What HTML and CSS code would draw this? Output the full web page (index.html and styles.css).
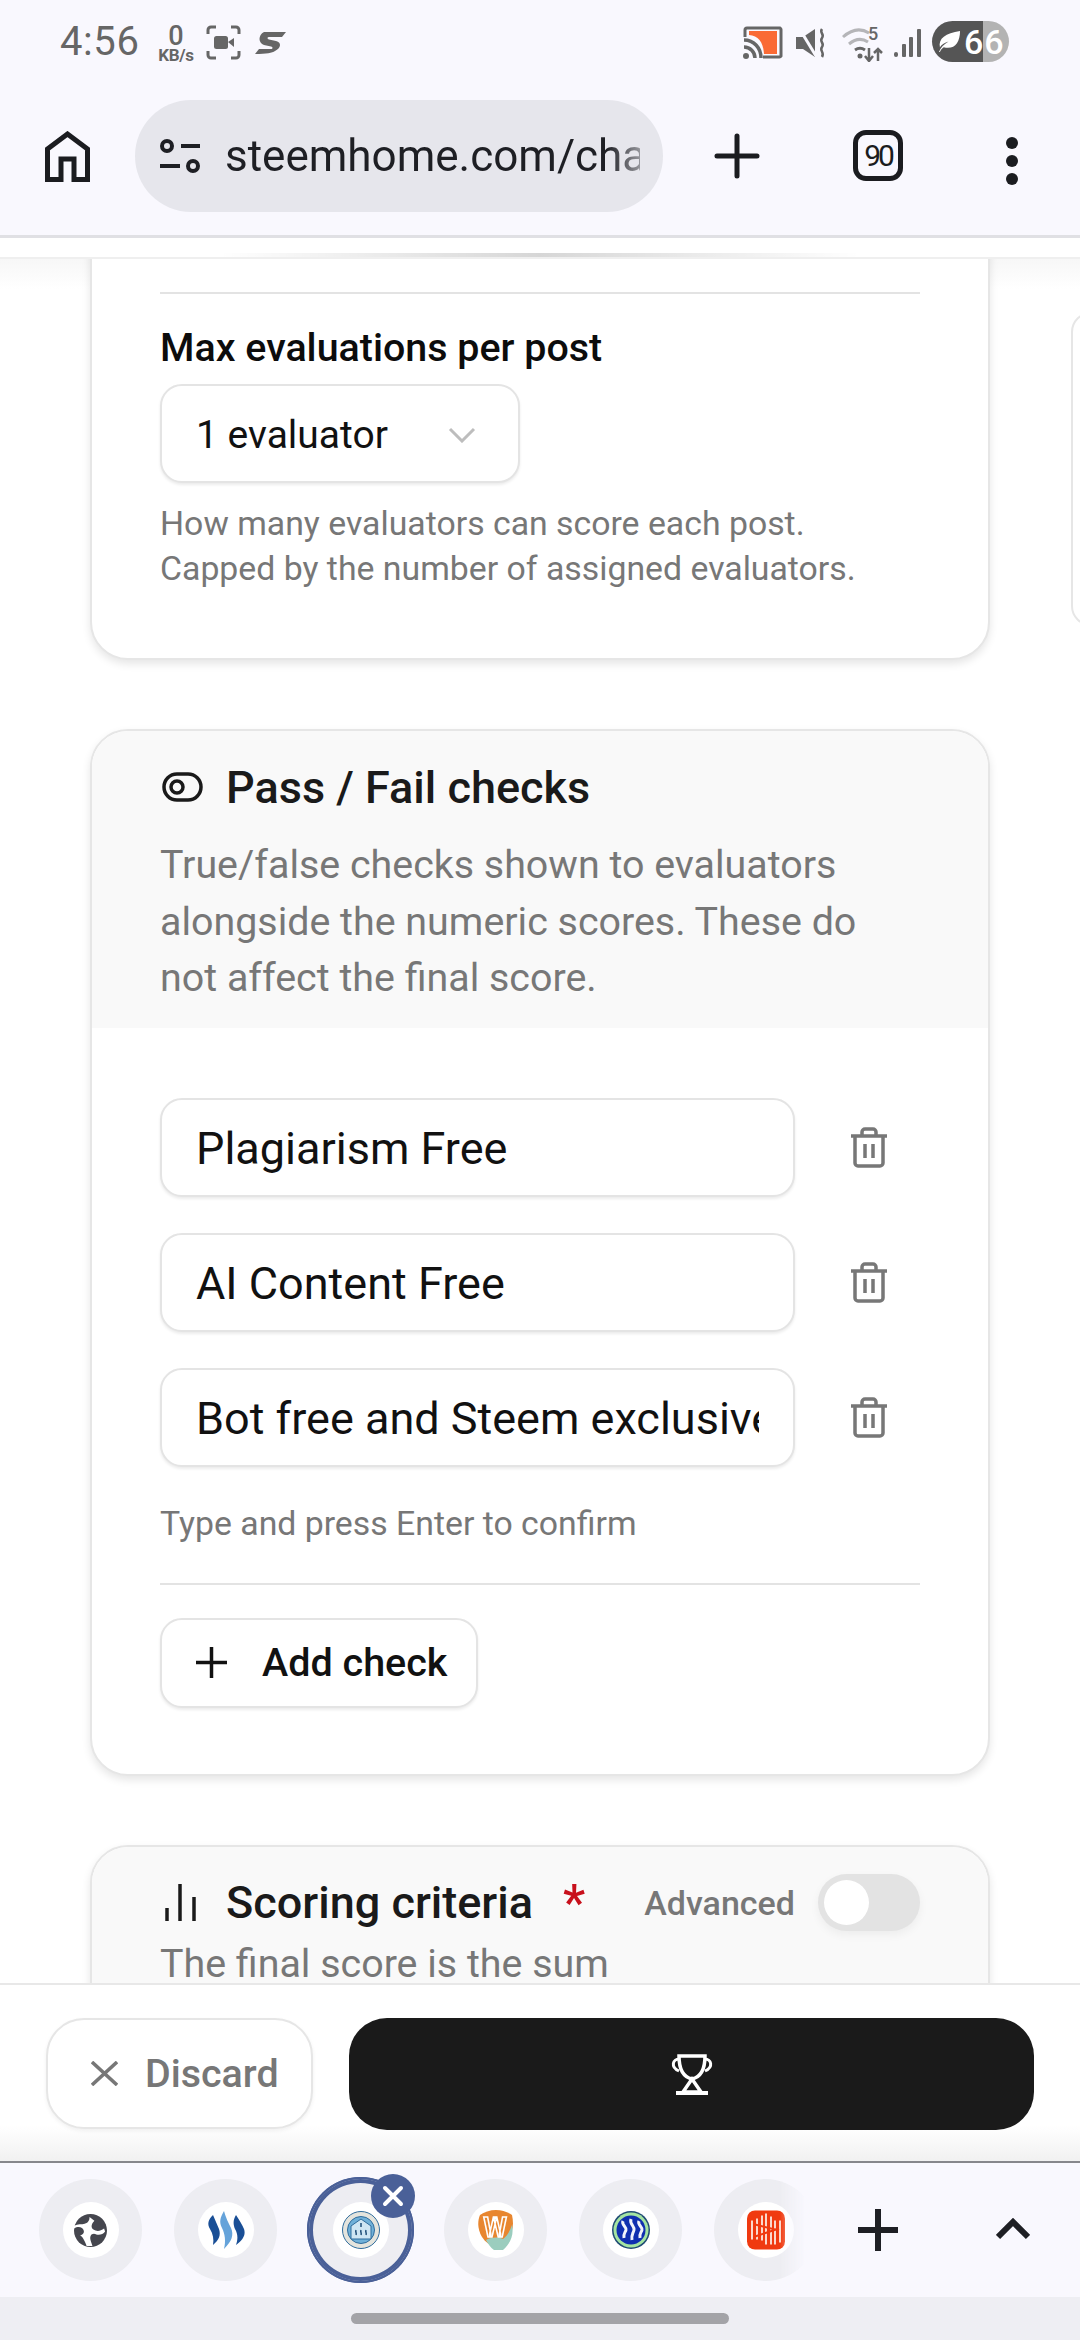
FILE: index.html
```html
<!DOCTYPE html>
<html lang="en">
<head>
    <meta charset="UTF-8">
    <meta name="viewport" content="width=device-width, initial-scale=1.0">
    <title>Challenge settings</title>
    <link rel="stylesheet" href="styles.css">
</head>
<body>
    <header class="browser-top">
        <div class="status-bar">
            <div class="status-left">
                <span class="clock">4:56</span>
                <span class="speed"><b>0</b><small>KB/s</small></span>
                <svg class="ic-record" viewBox="0 0 35 35" fill="none" stroke="#666" stroke-width="3">
                    <path d="M2 9V5a3 3 0 0 1 3-3h5M25 2h5a3 3 0 0 1 3 3v4M33 26v4a3 3 0 0 1-3 3h-5M10 33H5a3 3 0 0 1-3-3v-4"/>
                    <rect x="8" y="11" width="14" height="13" rx="2.5" fill="#666" stroke="none"/>
                    <path d="M22 17l6-4v9z" fill="#666" stroke="none"/>
                </svg>
                <svg class="ic-s" viewBox="0 0 31 23"><path d="M9 1h22l-4 5H14c-2 0-2 2 0 2.500l7 1.500c6 1.500 5 7-1 10-3 2-8 3-20 3l4-5h12c2 0 2-2 0-2.500l-7-1.500C3 12 3 4 9 1z" fill="#666"/></svg>
            </div>
            <div class="status-right">
                <svg class="ic-cast" viewBox="0 0 40 33">
                    <path d="M2 11V4a2 2 0 0 1 2-2h33a2 2 0 0 1 1 2v26a2 2 0 0 1-2 1H20" fill="none" stroke="#666" stroke-width="3"/>
                    <path d="M6 5h28v23H21C20 15 15 10 6 9z" fill="#fa6a35"/>
                    <path d="M1 14c10 0 17 8 17 18M1 21c6 0 11 5 11 11" fill="none" stroke="#666" stroke-width="3.500"/>
                    <circle cx="3" cy="30" r="3" fill="#666"/>
                </svg>
                <svg class="ic-mute" viewBox="0 0 30 30">
                    <path d="M0 9h7l12-8v28L7 21H0z" fill="#666"/>
                    <path d="M3 0l17 28" stroke="#f9f8fe" stroke-width="3"/>
                    <path d="M26 1c-3 4 3 5 0 9s3 5 0 9 3 5 0 10" fill="none" stroke="#666" stroke-width="2.500"/>
                </svg>
                <span class="wifi">
                    <svg viewBox="0 0 43 36" fill="none" stroke="#b5b5b8" stroke-width="3">
                        <path d="M1 11c9-8 18-9 26-4M7 18c6-5 13-6 19-2"/>
                        <path d="M13 24c3-2 7-2 10 0" stroke="#666"/>
                        <circle cx="18" cy="30" r="2.500" fill="#666" stroke="none"/>
                        <path d="M27 22v13M23 30l4 5 4-5M36 35V23M32 27l4-4 4 4" stroke="#666" stroke-width="2.500"/>
                    </svg>
                    <i>5</i>
                </span>
                <svg class="ic-signal" viewBox="0 0 27 30" fill="#666">
                    <rect x="0" y="24" width="4" height="5" rx="2"/>
                    <rect x="8" y="16" width="4" height="13" rx="1"/>
                    <rect x="15" y="9" width="4" height="20" rx="1"/>
                    <rect x="23" y="1" width="4" height="28" rx="1"/>
                </svg>
                <div class="battery">
                    <svg viewBox="0 0 24 24"><path d="M1 23c2-5 5-8 10-11-4 1-7 3-9 6C0 9 8 3 23 1c0 12-6 20-17 17-2 1-3 3-4 5z" fill="#fff"/></svg>
                    <span>66</span>
                </div>
            </div>
        </div>
        <div class="toolbar">
            <svg class="ic-home" viewBox="0 0 45 51" fill="none" stroke="#1b1c20" stroke-width="5">
                <path d="M2.500 48.500V18L22.500 3l20 15v30.500H29V28H16v20.500z"/>
            </svg>
            <div class="url-pill">
                <svg class="ic-tune" viewBox="0 0 40 34" fill="none" stroke="#1e1f24" stroke-width="4">
                    <circle cx="7" cy="7" r="5"/><path d="M21 7h19M0 27h20"/><circle cx="33" cy="27" r="5"/>
                </svg>
                <span class="url-text">steemhome.com/challenges</span>
            </div>
            <svg class="ic-plus" viewBox="0 0 46 46" stroke="#1b1c20" stroke-width="5" stroke-linecap="round"><path d="M23 3v40M3 23h40"/></svg>
            <div class="tab-count">90</div>
            <div class="dots"><i></i><i></i><i></i></div>
        </div>
    </header>

    <div class="top-strip"></div>

    <main class="scroll-area">
        <div class="column">
            <section class="card card-cut">
                <div class="card-body">
                    <hr class="divider divider-first">
                    <label class="field-label">Max evaluations per post</label>
                    <div class="select-box">
                        <span>1 evaluator</span>
                        <svg viewBox="0 0 28 16" fill="none" stroke="#bdbdbd" stroke-width="3"><path d="M2 2l12 12L26 2"/></svg>
                    </div>
                    <p class="help">How many evaluators can score each post.<br>Capped by the number of assigned evaluators.</p>
                </div>
            </section>

            <section class="card">
                <div class="card-head">
                    <div class="head-title">
                        <svg class="ic-head" viewBox="0 0 41 30" fill="none" stroke="#1a1a1a" stroke-width="3.500">
                            <rect x="2" y="2" width="37" height="26" rx="13"/><circle cx="15" cy="15" r="6"/>
                        </svg>
                        <h2>Pass / Fail checks</h2>
                    </div>
                    <p class="head-sub">True/false checks shown to evaluators alongside the numeric scores. These do not affect the final score.</p>
                </div>
                <div class="card-body card-body-checks">
                    <div class="check-row">
                        <div class="text-box"><span class="text-clip">Plagiarism Free</span></div>
                        <svg class="ic-trash" viewBox="0 0 38 41" fill="none" stroke="#777" stroke-width="3.500"><path d="M1 9h36M12 9V5a3 3 0 0 1 3-3h8a3 3 0 0 1 3 3v4M5 9v27a3 3 0 0 0 3 3h22a3 3 0 0 0 3-3V9M15 17v14M23 17v14"/></svg>
                    </div>
                    <div class="check-row">
                        <div class="text-box"><span class="text-clip">AI Content Free</span></div>
                        <svg class="ic-trash" viewBox="0 0 38 41" fill="none" stroke="#777" stroke-width="3.500"><path d="M1 9h36M12 9V5a3 3 0 0 1 3-3h8a3 3 0 0 1 3 3v4M5 9v27a3 3 0 0 0 3 3h22a3 3 0 0 0 3-3V9M15 17v14M23 17v14"/></svg>
                    </div>
                    <div class="check-row">
                        <div class="text-box"><span class="text-clip">Bot free and Steem exclusive</span></div>
                        <svg class="ic-trash" viewBox="0 0 38 41" fill="none" stroke="#777" stroke-width="3.500"><path d="M1 9h36M12 9V5a3 3 0 0 1 3-3h8a3 3 0 0 1 3 3v4M5 9v27a3 3 0 0 0 3 3h22a3 3 0 0 0 3-3V9M15 17v14M23 17v14"/></svg>
                    </div>
                    <p class="help help-hint">Type and press Enter to confirm</p>
                    <hr class="divider divider-hint">
                    <button class="add-btn">
                        <svg viewBox="0 0 31 31" stroke="#111" stroke-width="3.500"><path d="M15.500 0v31M0 15.500h31"/></svg>
                        Add check
                    </button>
                </div>
            </section>

            <section class="card">
                <div class="card-head card-head-score">
                    <div class="head-title">
                        <svg class="ic-bars" viewBox="0 0 31 37" fill="none" stroke="#1a1a1a" stroke-width="3.500"><path d="M2 37V24M15 37V0M29 37V13"/></svg>
                        <h2>Scoring criteria</h2>
                        <span class="required">*</span>
                        <span class="adv-label">Advanced</span>
                        <span class="switch"><i></i></span>
                    </div>
                    <p class="head-sub">The final score is the sum</p>
                </div>
            </section>
        </div>
        <div class="side-card"></div>
    </main>

    <div class="action-bar">
        <button class="discard-btn">
            <svg viewBox="0 0 27 25" stroke="#777" stroke-width="3.500"><path d="M1 1l25 23M26 1L1 24"/></svg>
            Discard
        </button>
        <button class="submit-btn" aria-label="Submit">
            <svg viewBox="0 0 42 42" fill="none" stroke="#fff" stroke-width="3.500">
                <path d="M8 3h26c0 13-4 21-13 23C12 24 8 16 8 3z"/>
                <path d="M8 6C2 6-1 14 8 18M34 6c6 0 9 8 0 12" stroke-width="3"/>
                <path d="M21 26l-9 13h18z"/>
                <path d="M5 40h32" stroke-width="4"/>
            </svg>
        </button>
    </div>

    <div class="tab-strip">
        <div class="tab-list">
            <div class="tab">
                <span class="favicon">
                    <svg class="fav-globe" viewBox="0 0 34 34"><circle cx="17" cy="17" r="17" fill="#45464e"/><path d="M0 15c5-3 9-1 10 2 1 3-2 5-4 5 3 1 5 6 7 11h6c-1-4-3-7-2-10 1-3 4-3 6-2 3 1 7 0 9-3l-1-3c-4 3-8 3-11 1-3-2-2-6 1-9l-5-4c0 3-1 6-5 7-3 1-7 0-11 2z" fill="#fff"/></svg>
                </span>
            </div>
            <div class="tab">
                <span class="favicon">
                    <svg viewBox="0 0 38 40">
                        <path d="M6 5C1 10 0 14 3 19c3 5 4 10 3 16 6-5 8-10 6-16-2-5-4-9-6-14z" fill="#1a4f96"/>
                        <path d="M17 1c-4 7-5 11-2 17 3 6 4 13 2 21 8-8 10-14 7-21-3-6-5-10-7-17z" fill="#65a3da"/>
                        <path d="M29 5c-3 5-3 9-1 14 3 5 3 10 1 16 7-5 10-10 8-16-2-5-5-9-8-14z" fill="#1a4f96"/>
                    </svg>
                </span>
            </div>
            <div class="tab tab-current">
                <span class="favicon">
                    <svg viewBox="0 0 38 38">
                        <circle cx="19" cy="19" r="18.500" fill="#e4e4dd" stroke="#2f6c9c" stroke-width="1"/>
                        <circle cx="19" cy="19" r="13.500" fill="#6fb0d8" stroke="#2f6c9c" stroke-width="1"/>
                        <path d="M19 8l10 7v13H9V15z" fill="#cfe6f3" stroke="#2f6c9c" stroke-width="1"/>
                        <path d="M14 19c-1 2 1 3 0 5M19 19c-1 2 1 3 0 5M24 19c-1 2 1 3 0 5M19 12v4" fill="none" stroke="#1f4e78" stroke-width="1.500"/>
                    </svg>
                </span>
                <span class="tab-close">
                    <svg viewBox="0 0 22 22" stroke="#fff" stroke-width="4" stroke-linecap="round"><path d="M3 3l16 16M19 3L3 19"/></svg>
                </span>
            </div>
            <div class="tab">
                <span class="favicon">
                    <svg viewBox="0 0 38 40">
                        <path d="M19 0c6 0 12 2 16 5 2 9 1 17-4 24-3 4-7 7-12 9-6-3-11-6-14-11C1 20 0 12 3 5c4-3 10-5 16-5z" fill="#e8862f"/>
                        <path d="M9 30c6-3 12-3 17-1 4-3 7-8 9-14 2 9-1 18-9 25h-9c-3-2-6-6-8-10z" fill="#9bcdbe"/>
                        <text x="18" y="27" class="favicon-w">W</text>
                    </svg>
                </span>
            </div>
            <div class="tab">
                <span class="favicon">
                    <svg viewBox="0 0 38 38" fill="none">
                        <circle cx="19" cy="19" r="19" fill="#1e4a74"/>
                        <circle cx="19" cy="19" r="17.500" fill="#a4e4a2"/>
                        <circle cx="19" cy="19" r="14.500" fill="#0f2fb0"/>
                        <path d="M11 10c-2 4 4 6 3 9s-3 4-2 8M19 8c-2 5 4 7 3 11s-3 5-2 10M27 10c-2 4 4 6 3 9s-3 4-2 8" stroke="#f1f3fb" stroke-width="3"/>
                    </svg>
                </span>
            </div>
            <div class="tab">
                <span class="favicon">
                    <svg viewBox="0 0 38 39">
                        <rect width="38" height="39" rx="8" fill="#f03a10"/>
                        <path d="M5 10v19M10 8v21M15 5v25M19 3v31M24 6v28M28 10v24M33 10v22" stroke="#fbd8cc" stroke-width="2"/>
                        <path d="M8 26l24-8M8 14l24 6" stroke="#f03a10" stroke-width="2"/>
                    </svg>
                </span>
            </div>
        </div>
        <svg class="strip-plus" viewBox="0 0 40 42" stroke="#1e1f24" stroke-width="6"><path d="M20 0v42M0 21h40"/></svg>
        <svg class="strip-up" viewBox="0 0 34 22" fill="none" stroke="#1e1f24" stroke-width="6"><path d="M2 19L17 4l15 15"/></svg>
    </div>

    <div class="nav-bar"><i></i></div>
</body>
</html>
```

FILE: styles.css
```css
* {
    box-sizing: border-box;
}
html, body {
    margin: 0;
    padding: 0;
}
body {
    width: 1080px;
    height: 2340px;
    display: flex;
    flex-direction: column;
    overflow: hidden;
    font-family: Roboto, "Noto Sans", sans-serif;
    background: #fff;
    color: #111;
}

/* browser chrome */
.browser-top {
    height: 238px;
    flex: none;
    background: #f9f8fe;
    border-bottom: 3px solid #e0e0e4;
}
.status-bar {
    height: 84px;
    padding: 21px 71px 0 60px;
    display: flex;
    justify-content: space-between;
    align-items: flex-start;
}
.status-left, .status-right {
    display: flex;
    align-items: center;
}
.status-left {
    height: 41px;
}
.clock {
    width: 81px;
    font-size: 40px;
    line-height: 41px;
    letter-spacing: 0.6px;
    color: #666;
}
.speed {
    margin-left: 15px;
    width: 40px;
    display: flex;
    flex-direction: column;
    align-items: center;
    color: #666;
    padding-top: 4px;
}
.speed b {
    font-size: 27px;
    font-weight: 500;
    line-height: 23px;
}
.speed small {
    font-size: 17px;
    font-weight: 700;
    line-height: 15px;
    letter-spacing: -0.3px;
}
.ic-record {
    width: 35px;
    height: 35px;
    margin-left: 10px;
    margin-top: 2px;
}
.ic-s {
    width: 31px;
    height: 23px;
    margin-left: 14px;
    margin-top: 2px;
}
.status-right {
    height: 41px;
}
.ic-cast {
    width: 40px;
    height: 33px;
    margin-top: 2px;
}
.ic-mute {
    width: 30px;
    height: 30px;
    margin-left: 13px;
    margin-top: 2px;
}
.wifi {
    position: relative;
    width: 43px;
    height: 36px;
    margin-left: 16px;
    margin-top: 4px;
}
.wifi svg {
    width: 43px;
    height: 36px;
    display: block;
}
.wifi i {
    position: absolute;
    top: -2px;
    left: 26px;
    font-style: normal;
    font-size: 18px;
    font-weight: 500;
    line-height: 20px;
    color: #666;
}
.ic-signal {
    width: 27px;
    height: 30px;
    margin-left: 9px;
    margin-top: 2px;
}
.battery {
    width: 77px;
    height: 41px;
    margin-left: 11px;
    border-radius: 21px;
    background: linear-gradient(90deg, #555 0, #555 51px, #b3b3b3 51px);
    display: flex;
    align-items: center;
    padding-left: 6px;
    color: #fff;
}
.battery svg {
    width: 23px;
    height: 23px;
}
.battery span {
    font-size: 34px;
    font-weight: 500;
    margin-left: 3px;
    letter-spacing: 1px;
}
.toolbar {
    height: 151px;
    padding: 16px 0 0 45px;
    display: flex;
    align-items: flex-start;
}
.ic-home {
    width: 45px;
    height: 51px;
    margin-top: 31px;
}
.url-pill {
    width: 528px;
    height: 112px;
    margin-left: 45px;
    border-radius: 56px;
    background: #e6e6ec;
    display: flex;
    align-items: center;
    padding: 0 23px 0 25px;
}
.ic-tune {
    width: 40px;
    height: 34px;
    flex: none;
}
.url-text {
    margin-left: 25px;
    font-size: 44px;
    color: #1e1f24;
    white-space: nowrap;
    overflow: hidden;
    -webkit-mask-image: linear-gradient(90deg, #000 92%, rgba(0, 0, 0, 0.4));
    mask-image: linear-gradient(90deg, #000 92%, rgba(0, 0, 0, 0.4));
}
.ic-plus {
    width: 46px;
    height: 46px;
    margin: 33px 0 0 51px;
}
.tab-count {
    width: 50px;
    height: 51px;
    margin: 30px 0 0 93px;
    border: 5px solid #1b1c20;
    border-radius: 13px;
    font-size: 30px;
    text-align: center;
    line-height: 41px;
    letter-spacing: -3px;
    color: #1b1c20;
}
.dots {
    margin: 37px 0 0 103px;
    display: flex;
    flex-direction: column;
    gap: 6px;
}
.dots i {
    display: block;
    width: 12px;
    height: 12px;
    border-radius: 50%;
    background: #1b1c20;
}
.top-strip {
    height: 21px;
    flex: none;
    background: #fff;
    position: relative;
    border-bottom: 2px solid #efefef;
}
.top-strip::after {
    content: "";
    position: absolute;
    left: 220px;
    right: 220px;
    bottom: 0;
    height: 4px;
    background: linear-gradient(90deg, rgba(0, 0, 0, 0), rgba(0, 0, 0, 0.16) 50%, rgba(0, 0, 0, 0));
}

/* page content */
.scroll-area {
    flex: 1;
    min-height: 0;
    overflow: hidden;
    display: flex;
    padding-left: 90px;
    gap: 81px;
    background: linear-gradient(#f7f7f7, #fff 30px);
}
.column {
    width: 900px;
    flex: none;
    display: flex;
    flex-direction: column;
    gap: 69px;
}
.card {
    background: #fff;
    border: 2px solid #e6e6e6;
    border-radius: 38px;
    box-shadow: 0 4px 8px rgba(0, 0, 0, 0.1);
    overflow: hidden;
    flex: none;
}
.card-cut {
    margin-top: -40px;
}
.card-body {
    padding: 0 68px 67px;
}
.divider {
    border: 0;
    height: 2px;
    margin: 0;
    background: #e3e3e3;
}
.divider-first {
    margin-top: 71px;
}
.field-label {
    display: block;
    margin-top: 32px;
    font-size: 39.400px;
    font-weight: 500;
    line-height: 44px;
    color: #0c0c0c;
}
.select-box {
    width: 360px;
    height: 99px;
    margin-top: 14px;
    display: flex;
    align-items: center;
    justify-content: space-between;
    padding: 2px 42px 0 34px;
    background: #fff;
    border: 2px solid #e4e4e4;
    border-radius: 22px;
    box-shadow: 0 2px 3px rgba(0, 0, 0, 0.08);
    font-size: 39px;
    color: #111;
}
.select-box svg {
    width: 28px;
    height: 16px;
}
.help {
    margin: 18px 0 0;
    font-size: 33.800px;
    line-height: 45px;
    color: #777;
}
.card-head {
    background: #f9f9f9;
    padding: 28px 68px 21px;
}
.head-title {
    display: flex;
    align-items: center;
    height: 56px;
}
.ic-head {
    width: 41px;
    height: 30px;
    margin-left: 2px;
    flex: none;
}
.head-title h2 {
    margin: 0 0 0 23px;
    font-size: 45px;
    font-weight: 500;
    color: #1a1a1a;
    white-space: nowrap;
}
.head-sub {
    margin: 22px 0 0;
    font-size: 39.400px;
    line-height: 56.500px;
    color: #777;
}
.card-body-checks {
    padding-top: 70px;
    padding-bottom: 66px;
}
.check-row {
    display: flex;
    align-items: center;
    margin-bottom: 36px;
}
.check-row:nth-of-type(3) {
    margin-bottom: 0;
}
.text-box {
    width: 635px;
    height: 99px;
    padding: 2px 34px 0;
    display: flex;
    align-items: center;
    background: #fff;
    border: 2px solid #e4e4e4;
    border-radius: 22px;
    box-shadow: 0 2px 3px rgba(0, 0, 0, 0.08);
    font-size: 45px;
    color: #111;
}
.text-clip {
    display: block;
    min-width: 0;
    overflow: hidden;
    white-space: nowrap;
}
.ic-trash {
    width: 38px;
    height: 41px;
    margin-left: 55px;
}
.help-hint {
    margin-top: 34px;
}
.divider-hint {
    margin-top: 37px;
}
.add-btn {
    margin-top: 33px;
    width: 318px;
    height: 90px;
    padding: 0 0 0 34px;
    display: flex;
    align-items: center;
    gap: 35px;
    background: #fff;
    border: 2px solid #e4e4e4;
    border-radius: 22px;
    box-shadow: 0 2px 3px rgba(0, 0, 0, 0.08);
    font-family: inherit;
    font-size: 39.500px;
    font-weight: 500;
    color: #111;
}
.add-btn svg {
    width: 31px;
    height: 31px;
}
.card-head-score {
    padding-top: 28px;
    height: 200px;
}
.card-head-score .head-sub {
    margin-top: 5px;
}
.ic-bars {
    width: 31px;
    height: 37px;
    margin-left: 5px;
    flex: none;
}
.ic-bars + h2 {
    margin-left: 30px;
}
.required {
    margin: 0 0 0 30px;
    font-size: 50px;
    font-weight: 500;
    line-height: 56px;
    color: #c8101c;
}
.adv-label {
    margin-left: auto;
    font-size: 34px;
    font-weight: 500;
    color: #777;
}
.switch {
    width: 102px;
    height: 57px;
    margin-left: 23px;
    flex: none;
    padding: 6px;
    border-radius: 29px;
    background: #e3e3e3;
    box-shadow: 0 4px 10px rgba(0, 0, 0, 0.05);
}
.switch i {
    display: block;
    width: 45px;
    height: 45px;
    border-radius: 50%;
    background: #fff;
}
.side-card {
    width: 60px;
    height: 314px;
    margin-top: 53px;
    flex: none;
    background: #fff;
    border: 2px solid #e6e6e6;
    border-radius: 20px;
}

/* sticky actions */
.action-bar {
    height: 180px;
    flex: none;
    padding: 33px 46px 0;
    display: flex;
    align-items: flex-start;
    gap: 36px;
    background: linear-gradient(#fff 80%, #f1f1f1);
    border-top: 2px solid #e8e8e8;
    border-bottom: 2px solid #87878c;
}
.discard-btn {
    width: 267px;
    height: 111px;
    flex: none;
    display: flex;
    align-items: center;
    gap: 27px;
    padding: 0 0 0 43px;
    background: #fff;
    border: 2px solid #e6e6e6;
    border-radius: 38px;
    box-shadow: 0 2px 4px rgba(0, 0, 0, 0.06);
    font-family: inherit;
    font-size: 39.400px;
    font-weight: 500;
    color: #777;
}
.discard-btn svg {
    width: 27px;
    height: 25px;
}
.submit-btn {
    flex: 1;
    height: 112px;
    display: flex;
    align-items: center;
    justify-content: center;
    border: 0;
    border-radius: 38px;
    background: #1a1a1a;
}
.submit-btn svg {
    width: 42px;
    height: 42px;
}

/* tab strip */
.tab-strip {
    height: 134px;
    flex: none;
    background: #f9f8fe;
    display: flex;
    align-items: center;
}
.tab-list {
    width: 805px;
    height: 134px;
    flex: none;
    padding-left: 39px;
    display: flex;
    align-items: center;
    gap: 32px;
    overflow: hidden;
    -webkit-mask-image: linear-gradient(90deg, #000 780px, transparent 805px);
    mask-image: linear-gradient(90deg, #000 780px, transparent 805px);
}
.tab {
    position: relative;
    width: 103px;
    height: 102px;
    flex: none;
    border-radius: 50%;
    background: #ededf2;
    display: flex;
    align-items: center;
    justify-content: center;
}
.tab-current {
    box-shadow: 0 0 0 2px #4a6098, inset 0 0 0 4px #4a6098;
    outline: 2px solid #4a6098;
}
.tab-close {
    position: absolute;
    top: -5px;
    right: -3px;
    width: 44px;
    height: 44px;
    border-radius: 50%;
    background: #4a6098;
    display: flex;
    align-items: center;
    justify-content: center;
}
.tab-close svg {
    width: 22px;
    height: 22px;
}
.favicon {
    width: 56px;
    height: 56px;
    border-radius: 50%;
    background: #fff;
    display: flex;
    align-items: center;
    justify-content: center;
}
.favicon svg {
    width: 38px;
    height: 40px;
}
.favicon .fav-globe {
    width: 33px;
    height: 33px;
}
.favicon-w {
    font-family: Roboto, sans-serif;
    font-size: 27px;
    font-weight: 700;
    fill: #e8862f;
    stroke: #fff;
    stroke-width: 1.500px;
    text-anchor: middle;
}
.strip-plus {
    width: 40px;
    height: 42px;
    margin-left: 53px;
}
.strip-up {
    width: 34px;
    height: 22px;
    margin-left: 98px;
    margin-top: -2px;
}
.nav-bar {
    height: 43px;
    flex: none;
    background: #eeeef3;
    padding-top: 16px;
}
.nav-bar i {
    display: block;
    width: 378px;
    height: 11px;
    margin: 0 auto;
    border-radius: 6px;
    background: #a3a3a7;
}
```
